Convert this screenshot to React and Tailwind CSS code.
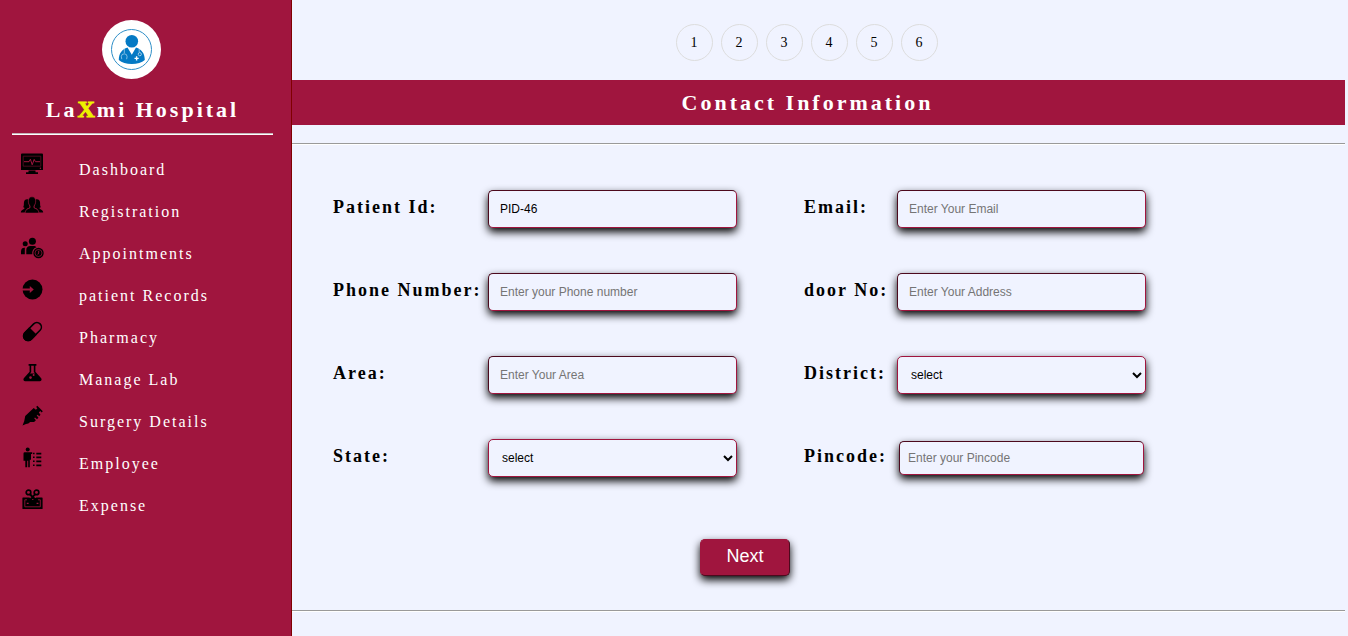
function MonitorIcon() {
  return (
    <svg viewBox="0 0 24 24" className="size-6" aria-hidden="true">
      <path d="M2 1.500h20a1 1 0 0 1 1 1V18H1V2.500a1 1 0 0 1 1-1z" />
      <path d="M3.200 4.200h17.600v10H3.200z" fill="none" stroke="#6a0e29" strokeWidth="0.700" />
      <path d="M4 9.700h5l1.400-2.500 1.800 5.600 2-5.400 1.200 2.300H20" fill="none" stroke="#a0153e" strokeWidth="1" />
      <circle cx="20.400" cy="16.300" r="0.700" fill="#a0153e" />
      <path d="M8.500 18.500h7v1.700h2.500v1.800H6v-1.800h2.500z" />
    </svg>
  );
}

function PeopleIcon() {
  return (
    <svg viewBox="0 0 24 24" className="size-6" aria-hidden="true">
      <path d="M7 5.200c1 0 1.500.3 1.900.8-.7 2-.1 4.900.7 6.200v1.300L7 14.800 4.800 18.600H.8c0-2.400 1.700-2.900 3.600-3.900v-1c-.5 0-1.200-.3-1.200-.6 1-1.200.5-3.400.8-5 .2-1.700 1.400-2.900 3-2.900z" />
      <path d="M17 5.200c-1 0-1.500.3-1.900.8.7 2 .1 4.900-.7 6.200v1.300l2.600 1.300 2.200 3.800H23.200c0-2.400-1.700-2.900-3.600-3.900v-1c.5 0 1.200-.3 1.200-.6-1-1.200-.5-3.400-.8-5-.2-1.700-1.400-2.900-3-2.900z" />
      <path d="M12 2.800c2.500 0 3.700 1.600 3.700 4.200 0 2.200-.8 4-1.800 5v1.700c1.900 1.300 4.800 1.300 5 5.400H5.100c.2-4.100 3.100-4.100 5-5.400V12c-1-1-1.800-2.800-1.800-5 0-2.600 1.200-4.200 3.700-4.200z" stroke="#a0153e" strokeWidth="0.600" />
    </svg>
  );
}

function AppointmentIcon() {
  return (
    <svg viewBox="0 0 24 24" className="size-6" aria-hidden="true">
      <circle cx="5.200" cy="7.700" r="2.500" />
      <circle cx="12.400" cy="5.300" r="3.500" />
      <path d="M1 18.200v-3A3.600 3.600 0 0 1 4.800 11.800v6.400z" />
      <path d="M6.300 18.200V14c0-2.500 1.800-3.900 4-3.900h3.200c1.300 0 2.300.5 3 1.100-3.300 1-4.700 4-4.200 7z" />
      <circle cx="18.500" cy="17" r="5.200" />
      <circle cx="18.500" cy="17" r="3.500" fill="none" stroke="#a0153e" strokeWidth="0.700" />
      <path d="M18.700 14.800V17l-.9 1.500" fill="none" stroke="#a0153e" strokeWidth="0.900" />
    </svg>
  );
}

function RecordsIcon() {
  return (
    <svg viewBox="0 0 24 24" className="size-6" aria-hidden="true">
      <circle cx="12.500" cy="11.500" r="10" />
      <path d="M1.500 10.500h8.300V8l4 3.500-4 3.500v-2.500H1.500z" fill="#a0153e" />
    </svg>
  );
}

function PillIcon() {
  return (
    <svg viewBox="0 0 24 24" className="size-6" aria-hidden="true">
      <g transform="rotate(-45 12.500 11.500)">
        <rect x="1.800" y="7" width="21.400" height="9" rx="4.500" fill="none" stroke="#000" strokeWidth="1.600" />
        <path d="M13.200 6.200v10.600H6.300a5.300 5.300 0 0 1 0-10.600z" />
      </g>
    </svg>
  );
}

function FlaskIcon() {
  return (
    <svg viewBox="0 0 24 24" className="size-6" aria-hidden="true">
      <path
        fillRule="evenodd"
        d="M8.600 2h7.800v1.700h-1v6l5.800 6.600c.9 1.300.2 3-1.500 3H5.300c-1.700 0-2.400-1.700-1.500-3l5.800-6.600v-6h-1zM11.200 3.700v6.200l-1.200 1.500h5l-1.200-1.500V3.700z"
      />
      <circle cx="13.600" cy="12.900" r="1" fill="#a0153e" />
      <circle cx="10.500" cy="15.600" r="1.300" fill="#a0153e" />
    </svg>
  );
}

function SyringeIcon() {
  return (
    <svg viewBox="0 0 24 24" className="size-6" aria-hidden="true">
      <path d="m2.500 21.500 1.700-4.200 1-5.200 8.500-8 2.200 1.600 1.500-1.500-1.300-1.300 1.200-1.200 5.500 5.500-1.200 1.200-1.300-1.300-1.500 1.500 1.700 2.200-1.200 1.400-1.800-1.500-.8.800 1.800 2.200-1.500 1.600-2-1.900-.8.800 1.700 2.100-1.800 1.600-3.900.2-1.900 1.500-2.300.5z" />
    </svg>
  );
}

function EmployeeIcon() {
  return (
    <svg viewBox="0 0 24 24" className="size-6" aria-hidden="true">
      <circle cx="7.700" cy="3.600" r="2" />
      <path d="M5 6.200h7.200v1.900h-1.200v5.700H9.800v7.400H8.200v-6.500h-1v6.500H5.300v-6.500H3.500V7.600A1.400 1.400 0 0 1 5 6.200z" />
      <path d="M13 6.800h1.600v1.400H13zM13 10.600h1.600V12H13zM13 14.600h1.600V16H13zM13 18.600h1.600V20H13zM16.300 6.700h5v1.700h-5zM16.300 10.500h5v1.700h-5zM16.300 14.500h5v1.700h-5zM16.300 18.500h5v1.700h-5z" />
    </svg>
  );
}

function ExpenseIcon() {
  return (
    <svg viewBox="0 0 24 24" className="size-6" aria-hidden="true">
      <path d="M3 9.500h19a.6.600 0 0 1 .6.600v10.400a.6.600 0 0 1-.6.600H3a.6.600 0 0 1-.6-.6V10.100a.6.600 0 0 1 .6-.6z" />
      <path d="M7 11.800H4.800v7h15.500v-7H18" fill="none" stroke="#a0153e" strokeWidth="0.800" />
      <path d="M6.800 14.700h1.800V16H6.800zM16.600 14.700h1.800V16h-1.800z" fill="#a0153e" />
      <path d="m9 8.500 4 3.300 3.600-3.300" fill="none" stroke="#a0153e" strokeWidth="0.900" />
      <circle cx="8.500" cy="4.400" r="2.300" fill="none" stroke="#000" strokeWidth="1.700" />
      <circle cx="16.500" cy="4.400" r="2.300" fill="none" stroke="#000" strokeWidth="1.700" />
      <path d="m9.800 6 5.500 6M15.200 6l-5.700 7" fill="none" stroke="#000" strokeWidth="1.900" />
    </svg>
  );
}

function DoctorLogo() {
  return (
    <svg viewBox="0 0 59 59" className="size-[59px]" role="img" aria-label="Doctor">
      <circle cx="29.500" cy="29.500" r="29.500" fill="#fff" />
      <circle cx="29.500" cy="29.500" r="20" fill="none" stroke="#2f8fc8" strokeWidth="1" />
      <circle cx="29.800" cy="21.300" r="6.300" fill="#0479c4" />
      <path d="M25.500 27.500C20 29 16.800 33.500 16.800 40c3 2.700 7.500 4 13 4s10-1.300 13-4c0-6.500-3.300-11-8.800-12.500l-4.200 7.300z" fill="#0479c4" />
      <path d="M22.300 28.500v4.500M19.800 39.200l-.5-2.500a2.900 2.900 0 0 1 5.800 0l-.5 2.500" fill="none" stroke="#b5d9f0" strokeWidth="0.700" />
      <path d="M37.200 29v3.500" fill="none" stroke="#b5d9f0" strokeWidth="0.700" />
      <circle cx="37.800" cy="34.200" r="1.600" fill="none" stroke="#d5eaf7" strokeWidth="0.700" />
      <path d="M32.500 37.700h1.400v-1.400h1.400v1.400h1.400v1.400h-1.400v1.400h-1.400v-1.400h-1.400z" fill="#fff" />
    </svg>
  );
}

const navItems = [
  ["Dashboard", MonitorIcon],
  ["Registration", PeopleIcon],
  ["Appointments", AppointmentIcon],
  ["patient Records", RecordsIcon],
  ["Pharmacy", PillIcon],
  ["Manage Lab", FlaskIcon],
  ["Surgery Details", SyringeIcon],
  ["Employee", EmployeeIcon],
  ["Expense", ExpenseIcon],
];

const controlBase =
  'rounded-[5px] border border-[#a0153e] bg-[#f0f3ff] font-["Liberation_Sans",sans-serif] text-xs text-black shadow-[0_4px_8px_#000] placeholder:text-[#757575]';

function FieldLabel({ id, children, second }) {
  return (
    <label
      htmlFor={id}
      className={`${second ? "pl-[67px]" : ""} pb-1 text-lg leading-6 font-bold tracking-[2px] whitespace-nowrap`}
    >
      {children}
    </label>
  );
}

function TextField({ id, label, second, compact, ...rest }) {
  return (
    <>
      <FieldLabel id={id} second={second}>{label}</FieldLabel>
      <input
        id={id}
        type="text"
        className={`${controlBase} [border-style:inset] ${
          compact ? "mx-auto h-[34px] w-[245px] px-2" : "h-[38px] w-full px-[11px]"
        }`}
        {...rest}
      />
    </>
  );
}

function SelectField({ id, label, second }) {
  return (
    <>
      <FieldLabel id={id} second={second}>{label}</FieldLabel>
      <select id={id} className={`${controlBase} h-[38px] w-full pl-[9px]`}>
        <option>select</option>
      </select>
    </>
  );
}

function Divider() {
  return <hr className="h-[2px] border-t border-b border-t-[#9a9a9a] border-b-white" />;
}

export default function App() {
  return (
    <div className='flex min-h-screen bg-[#f0f3ff] font-["Liberation_Serif",serif] text-black'>
      <aside className="w-[292px] shrink-0 border-r border-[#800000] bg-[#a0153e] pt-5 pr-[18px] pl-3">
        <div className="flex justify-center pr-[22px]">
          <DoctorLogo />
        </div>
        <h1 className="mt-[14px] flex h-8 items-baseline justify-center text-[22px] leading-8 font-bold tracking-[3px] text-white">
          La<span className="text-2xl leading-8 tracking-[2px] text-[#eef200] [-webkit-text-stroke:1px_#eef200]">X</span>mi&nbsp;Hospital
        </h1>
        <hr className="mt-2 h-[2px] border-t border-t-[#c4b4b8] bg-white" />
        <nav className="mt-[17px]">
          <ul>
            {navItems.map(([label, Icon]) => (
              <li key={label} className="h-[42px]">
                <a href="#" className="flex items-start gap-[35px] pl-2 text-white">
                  <Icon />
                  <span className="pt-[6px] text-base leading-6 tracking-[2px]">{label}</span>
                </a>
              </li>
            ))}
          </ul>
        </nav>
      </aside>

      <main className="mr-[3px] min-w-0 flex-1 pt-6">
        <ol className="flex justify-center gap-2 pr-6">
          {[1, 2, 3, 4, 5, 6].map((n) => (
            <li
              key={n}
              className="flex size-[37px] items-center justify-center rounded-full border border-[#dddddd] text-sm"
            >
              {n}
            </li>
          ))}
        </ol>
        <h2 className="mt-[19px] mb-[18px] bg-[#a0153e] pr-[22px] text-center text-[22px] leading-[45px] font-bold tracking-[3px] text-white">
          Contact Information
        </h2>
        <Divider />
        <form className="max-w-[905px] pt-[45px] pl-[41px]" onSubmit={(e) => e.preventDefault()}>
          <div className="grid grid-cols-[155px_minmax(0,249px)_160px_minmax(0,249px)] items-center gap-y-[45px]">
            <TextField id="pid" label="Patient Id:" defaultValue="PID-46" />
            <TextField id="email" label="Email:" placeholder="Enter Your Email" second />
            <TextField id="phone" label="Phone Number:" placeholder="Enter your Phone number" />
            <TextField id="door" label="door No:" placeholder="Enter Your Address" second />
            <TextField id="area" label="Area:" placeholder="Enter Your Area" />
            <SelectField id="district" label="District:" second />
            <SelectField id="state" label="State:" />
            <TextField id="pincode" label="Pincode:" placeholder="Enter your Pincode" second compact />
          </div>
          <div className="mt-[62px] mb-[34px] flex justify-center pr-10">
            <button
              type="submit"
              className='h-[37px] w-[90px] rounded-[5px] border border-[#a0153e] [border-style:outset] bg-[#a0153e] pb-1 font-["Liberation_Sans",sans-serif] text-lg leading-6 text-white shadow-[0_4px_8px_#000]'
            >
              Next
            </button>
          </div>
        </form>
        <Divider />
      </main>
    </div>
  );
}
